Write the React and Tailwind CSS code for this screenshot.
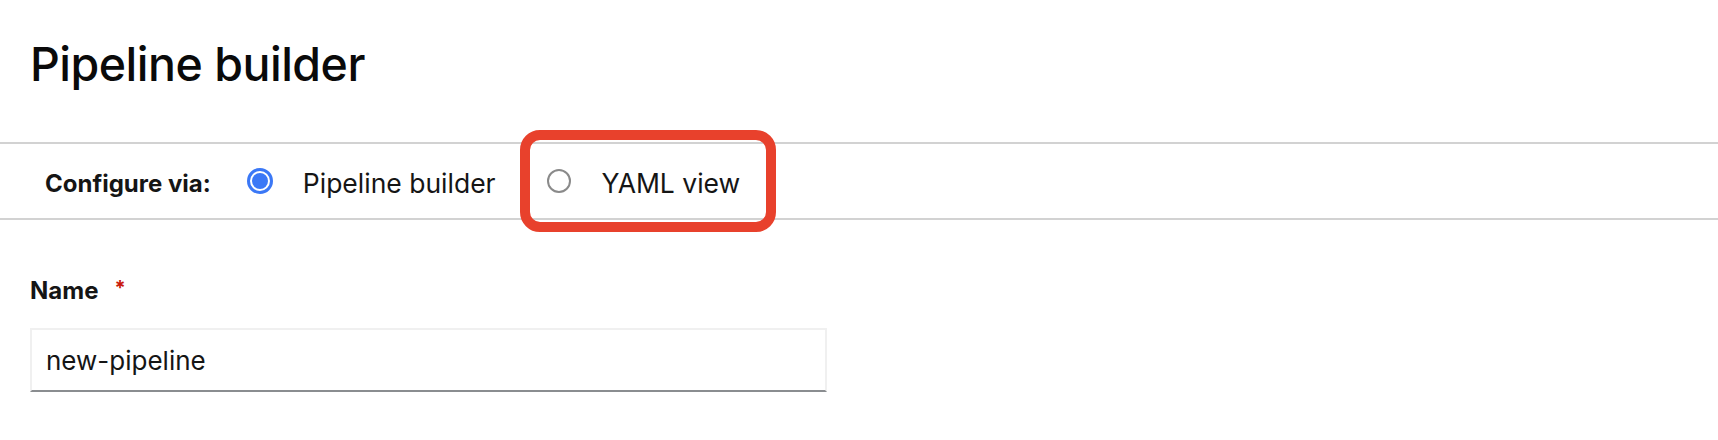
export default function App() {
  const font = { fontFamily: "Inter, 'Noto Sans', sans-serif" };
  return (
    <div className="relative w-[1718px] h-[440px] bg-white text-[#151515] overflow-hidden" style={font}>
      <div className="pl-[30px] pt-[34px] h-[142px]">
        <h1 className="text-[46.5px] leading-[60px] font-medium tracking-[-0.5px] text-[#0a0a0a]">Pipeline builder</h1>
      </div>
      <div className="flex items-center h-[78px] border-y-2 border-[#d2d2d2] pl-[45px]">
        <span className="text-[24px] font-bold pt-[6px]">Configure via:</span>
        <label className="flex items-center ml-[36px]">
          <span className="w-[26px] h-[26px] rounded-full border-[3px] border-[#3b78f6] flex items-center justify-center">
            <span className="w-[16px] h-[16px] rounded-full bg-[#3b78f6]" />
          </span>
          <span className="ml-[30px] text-[26.5px] pt-[6px]">Pipeline builder</span>
        </label>
        <label className="flex items-center ml-[51px]">
          <span className="w-[24px] h-[24px] rounded-full border-2 border-[#8a8a8a] bg-white" />
          <span className="ml-[31px] text-[26.5px] pt-[6px]">YAML view</span>
        </label>
      </div>
      <div className="pl-[30px] pt-[53px]">
        <div className="flex items-start">
          <span className="text-[24px] font-bold leading-[36px]">Name</span>
          <span className="ml-[16px] text-[20px] text-[#c9190b] font-bold leading-[30px]">*</span>
        </div>
        <div className="mt-[19px] w-[797px] h-[64px] border-2 border-[#f0f0f0] border-b-[#8a8d90] flex items-center px-[14px]">
          <span className="text-[26px]">new-pipeline</span>
        </div>
      </div>
      <div className="absolute left-[520px] top-[130px] w-[256px] h-[102px] border-[10px] border-[#e8412c] rounded-[20px]" />
    </div>
  );
}
